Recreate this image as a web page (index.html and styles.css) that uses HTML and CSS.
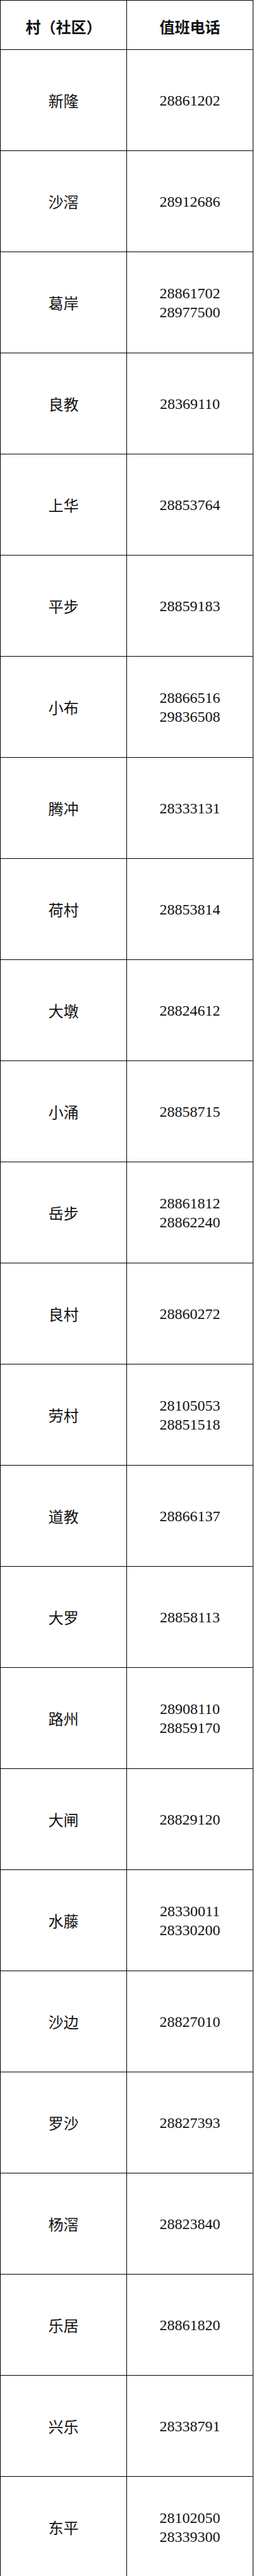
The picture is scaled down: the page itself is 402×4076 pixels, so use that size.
FILE: index.html
```html
<!DOCTYPE html>
<html lang="zh-CN">
<head>
<meta charset="utf-8">
<link rel="stylesheet" href="styles.css">
</head>
<body>
<table class="duty">
  <thead>
    <tr><th>村（社区）</th><th>值班电话</th></tr>
  </thead>
  <tbody>
    <tr><td>新隆</td><td>28861202</td></tr>
    <tr><td>沙滘</td><td>28912686</td></tr>
    <tr><td>葛岸</td><td>28861702<br>28977500</td></tr>
    <tr><td>良教</td><td>28369110</td></tr>
    <tr><td>上华</td><td>28853764</td></tr>
    <tr><td>平步</td><td>28859183</td></tr>
    <tr><td>小布</td><td>28866516<br>29836508</td></tr>
    <tr><td>腾冲</td><td>28333131</td></tr>
    <tr><td>荷村</td><td>28853814</td></tr>
    <tr><td>大墩</td><td>28824612</td></tr>
    <tr><td>小涌</td><td>28858715</td></tr>
    <tr><td>岳步</td><td>28861812<br>28862240</td></tr>
    <tr><td>良村</td><td>28860272</td></tr>
    <tr><td>劳村</td><td>28105053<br>28851518</td></tr>
    <tr><td>道教</td><td>28866137</td></tr>
    <tr><td>大罗</td><td>28858113</td></tr>
    <tr><td>路州</td><td>28908110<br>28859170</td></tr>
    <tr><td>大闸</td><td>28829120</td></tr>
    <tr><td>水藤</td><td>28330011<br>28330200</td></tr>
    <tr><td>沙边</td><td>28827010</td></tr>
    <tr><td>罗沙</td><td>28827393</td></tr>
    <tr><td>杨滘</td><td>28823840</td></tr>
    <tr><td>乐居</td><td>28861820</td></tr>
    <tr><td>兴乐</td><td>28338791</td></tr>
    <tr><td>东平</td><td>28102050<br>28339300</td></tr>
  </tbody>
</table>
</body>
</html>
```
FILE: styles.css
```css
html, body {
  margin: 0;
  padding: 0;
  background: #fff;
}
.duty {
  border-collapse: collapse;
  width: 401px;
  table-layout: fixed;
  font-family: "Liberation Serif", "Noto Sans CJK SC", serif;
  font-size: 24px;
  color: #111;
}
.duty th,
.duty td {
  border: 1px solid #000;
  padding: 0;
  text-align: center;
  vertical-align: middle;
  line-height: 30px;
}
.duty th {
  height: 73px;
  font-family: "Noto Sans CJK SC", sans-serif;
  font-weight: bold;
  padding-top: 4px;
}
.duty td {
  height: 159px;
}
.duty td:first-child {
  font-family: "Noto Sans CJK SC", sans-serif;
  font-weight: normal;
}
```
